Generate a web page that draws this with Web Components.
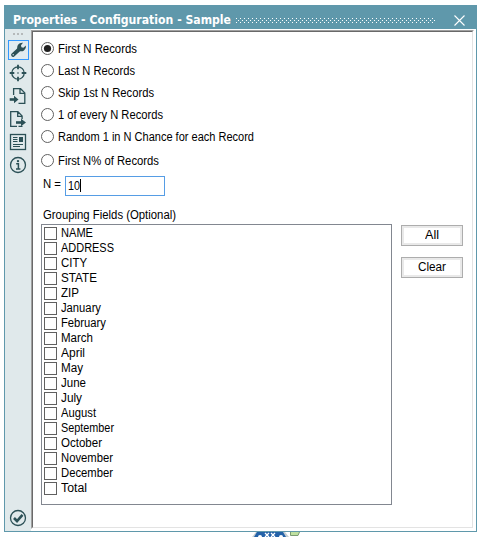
<!DOCTYPE html>
<html lang="en"><head><meta charset="utf-8"><title>Properties - Configuration - Sample</title>
<style>
body{margin:0;background:#fff;width:481px;height:537px;overflow:hidden;font:12px/15px "Liberation Sans",Arial,sans-serif;color:#000}
</style></head><body>
<sample-window></sample-window>
<script>
const define=(name,html,setup)=>customElements.define(name,class extends HTMLElement{
  constructor(){super();this.attachShadow({mode:'open'});}
  connectedCallback(){this.shadowRoot.innerHTML=html;if(setup)setup(this,this.shadowRoot);}
});
// Single-line text condensed or stretched to the width in its "w" attribute.
define('fit-text','<style>:host{display:inline-block;white-space:nowrap}span{display:inline-block;transform-origin:0 0}</style><span></span>',(el,r)=>{
  const s=r.querySelector('span');s.textContent=el.getAttribute('text');
  const w=+el.getAttribute('w');
  s.style.transform=`scaleX(${w/s.getBoundingClientRect().width})`;
  el.style.width=w+'px';
});
define('title-bar',`<style>
:host{display:flex;height:24px;background:#5f98ab;color:#fff;font:bold 11.5px/15px "DejaVu Sans",sans-serif;padding:0 11px 0 8px;align-items:center}
fit-text{margin-top:6px}.grip{flex:none;margin:7px 0 0 5px;display:block}.close{display:block;margin:7px 0 0 auto}
</style><fit-text w="218" text="Properties - Configuration - Sample"></fit-text>
<svg class="grip" width="199" height="5" shape-rendering="crispEdges"><defs><pattern id="p" width="4" height="4" patternUnits="userSpaceOnUse"><rect width="1" height="1" fill="#fff"/><rect x="2" y="2" width="1" height="1" fill="#fff"/></pattern></defs><rect width="199" height="5" fill="url(#p)"/></svg>
<svg class="close" width="11" height="11"><path d="M.5.5l10 10M10.5.5l-10 10" stroke="#fff" stroke-width="1.1"/></svg>`);
define('tool-bar',`<style>
:host{display:flex;flex-direction:column;width:26px;background:#e0e9eb;align-items:center;box-sizing:border-box;padding-top:3px}
svg{display:block;flex:none}.dots{margin-bottom:4px}.sel{border:1px solid #3399ff;background:#e0ebf0;width:19px;height:18px}
.i{width:18px;height:18px;margin-top:5px}.last{margin-top:auto;margin-bottom:4px}
svg{fill:none;stroke:#2b5056;stroke-width:1.3}
</style>
<svg class="dots" width="12" height="4"><path d="M1 2h2M5 2h2M9 2h2" stroke="#b5b9ba" stroke-width="2"/></svg>
<div class="sel"><svg width="19" height="18" viewBox="0 0 19 18"><path d="M4 14L10.5 8" stroke-width="3.8" stroke-linecap="round"/><path d="M8.2 7.8Q7.8 4 10.8 2.3Q12.8 1.4 14 1.8L12 4.3L12.4 6.2L14.4 6.7L16.9 4.5Q17.5 7.5 15 9.4Q13 10.8 10.4 10Z" fill="#2b5056" stroke="none"/><circle cx="4.2" cy="13.8" r=".7" fill="#e0ebf0" stroke="none"/></svg></div>
<svg class="i" viewBox="0 0 18 18" style="margin-top:4px"><circle cx="9" cy="9" r="6.2"/><path d="M9 .7v4.6M9 12.7v4.6M.7 9h4.6M12.7 9h4.6" stroke-width="1.8"/><path d="M8.4 9h1.2"/></svg>
<svg class="i" viewBox="0 0 18 18"><path d="M4.6 8V1.7h7l4.2 4.2v10.4H9.5M11 2v4.4h5"/><path d="M.7 12.5h5" stroke-width="2.6"/><path d="M5 8.7l4.5 3.8L5 16.3z" fill="#2b5056" stroke="none"/></svg>
<svg class="i" viewBox="0 0 18 18"><path d="M8 16.3H1.7V1.7h7.2l4.2 4.2v3M8.7 2v4.4h4.6M9.5 16.3h4"/><path d="M7 12.5h6" stroke-width="2.6"/><path d="M12 8.7l5 3.8L12 16.3z" fill="#2b5056" stroke="none"/></svg>
<svg class="i" viewBox="0 0 18 18"><rect x="1.5" y="1.5" width="15" height="15"/><path d="M4 4.5h4.5M4 6.5h4.5M4 8.5h4.5M4 11.5h10M4 13.5h7" stroke-width="1"/><rect x="10" y="4" width="4" height="5" fill="#2b5056" stroke="none"/></svg>
<svg class="i" viewBox="0 0 18 18"><circle cx="9" cy="9" r="7.5"/><path d="M7.2 7.8H9.4V13M7 13h4.4" stroke-width="1.5"/><circle cx="9" cy="5.1" r="1.2" fill="#2b5056" stroke="none"/></svg>
<svg class="i last" viewBox="0 0 18 18"><circle cx="9" cy="9" r="7.5"/><path d="M5 9l3 3L13.5 5.8" stroke-width="2.6"/></svg>`);
define('radio-option',`<style>:host{display:flex;height:22px;align-items:center}svg{display:block;margin-right:4px}::slotted(*){margin-top:2px}</style><svg width="13" height="13"><circle cx="6.5" cy="6.5" r="6" fill="#fff" stroke="#606060"/><circle class="dot" cx="6.5" cy="6.5" r="3.6" fill="#202020"/></svg><slot></slot>`,(e,r)=>{if(!e.hasAttribute('checked'))r.querySelector('.dot').remove();});
define('check-option',`<style>:host{display:flex;height:15px;align-items:center}i{box-sizing:border-box;width:13px;height:13px;border:1px solid #606060;margin-right:4px}</style><i></i><slot></slot>`);
define('push-button',`<style>:host{display:flex;box-sizing:border-box;width:62px;height:21px;border:1px solid #adadad;box-shadow:inset 0 0 0 2px #e9e9e9;background:#fff;align-items:center;justify-content:center}</style><slot></slot>`);
define('field-list',`<style>:host{display:block;box-sizing:border-box;width:351px;height:281px;border:1px solid #828790;padding:1px 2px;background:#fff}</style><div></div>`,(e,r)=>{
  const f=[['NAME',32],['ADDRESS',53],['CITY',26],['STATE',36],['ZIP',18],['January',40],['February',45],['March',32],['April',24],['May',22],['June',25],['July',21],['August',35],['September',53],['October',41],['November',52],['December',52],['Total',26]];
  r.querySelector('div').innerHTML=f.map(([t,w])=>`<check-option><fit-text text="${t}" w="${w}"></fit-text></check-option>`).join('');
});
define('config-form',`<style>
:host{display:block;padding:5px 0 0 8px}
.n{display:flex;margin:5px 0 0 2px}.n fit-text{margin-top:1px}
.in{box-sizing:border-box;width:100px;height:20px;margin-left:4px;border:1px solid #569de5;display:flex;padding:2px 0 0 2px}
.in fit-text{margin-top:0}.in b{width:1px;height:13px;background:#000;margin-top:0}
.lab{display:flex;margin:12px 0 1px 2px}.row{display:flex;gap:9px}.btns{display:flex;flex-direction:column;gap:11px;padding-top:1px}
</style>
<radio-option checked><fit-text text="First N Records" w="79"></fit-text></radio-option>
<radio-option><fit-text text="Last N Records" w="77"></fit-text></radio-option>
<radio-option><fit-text text="Skip 1st N Records" w="96"></fit-text></radio-option>
<radio-option><fit-text text="1 of every N Records" w="105"></fit-text></radio-option>
<radio-option><fit-text text="Random 1 in N Chance for each Record" w="196"></fit-text></radio-option>
<radio-option style="margin-top:2px"><fit-text text="First N% of Records" w="101"></fit-text></radio-option>
<div class="n"><fit-text text="N =" w="18"></fit-text><div class="in"><fit-text text="10" w="12"></fit-text><b></b></div></div>
<div class="lab"><fit-text text="Grouping Fields (Optional)" w="133"></fit-text></div>
<div class="row"><field-list></field-list><div class="btns"><push-button><fit-text text="All" w="14"></fit-text></push-button><push-button><fit-text text="Clear" w="28"></fit-text></push-button></div></div>`);
// Top edge of the canvas tool showing beneath the window.
define('canvas-tool',`<style>:host{display:block;height:5px}svg{display:block}</style><svg width="54" height="5"><path d="M2 5L6 0H35L39 5Z" fill="#c5ced2"/><path d="M4 5L7 0H33L36 5Z" fill="#2462a8"/><g fill="#fff"><circle cx="10" cy="5" r="2"/><circle cx="31" cy="5" r="2"/></g><path d="M15 1l4 4M19 1l-4 4M21 1l4 4M25 1l-4 4" stroke="#fff" stroke-width="1.3"/><path d="M40.5 0V3.5H48L49.5 0" fill="#bfe0a0" stroke="#7b9b72"/></svg>`);
define('sample-window',`<style>
:host{display:block;padding:5px 0 0 4px}
.w{box-sizing:border-box;width:473px;height:527px;display:flex;flex-direction:column;background:#fff;border:1px solid #5f98ab;border-top:0}
.b{flex:1;display:flex}
.p{flex:1;margin:1px 2px 2px 0;border-style:solid;border-width:1px;border-color:#a0a0a0 #fff #fff #a0a0a0}
.q{height:100%;box-sizing:border-box;border-style:solid;border-width:1px;border-color:#696969 #e3e3e3 #e3e3e3 #696969}
canvas-tool{margin-left:246px}
</style><div class="w"><title-bar></title-bar><div class="b"><tool-bar></tool-bar><div class="p"><div class="q"><config-form></config-form></div></div></div></div><canvas-tool></canvas-tool>`);
</script></body></html>
